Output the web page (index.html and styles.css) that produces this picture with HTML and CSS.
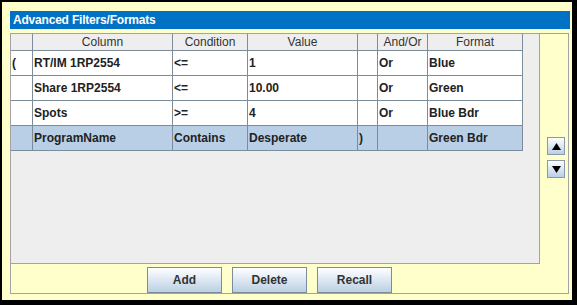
FILE: index.html
```html
<!DOCTYPE html>
<html>
<head>
<meta charset="utf-8">
<link rel="stylesheet" href="styles.css">
</head>
<body>
<div class="frame">
  <div class="title">Advanced Filters/Formats</div>
  <div class="panel">
    <div class="scroll">
      <div class="grid">
        <div class="hc"></div><div class="hc">Column</div><div class="hc">Condition</div><div class="hc">Value</div><div class="hc"></div><div class="hc">And/Or</div><div class="hc">Format</div>
        <div class="c">(</div><div class="c">RT/IM 1RP2554</div><div class="c">&lt;=</div><div class="c">1</div><div class="c"></div><div class="c">Or</div><div class="c">Blue</div>
        <div class="c"></div><div class="c">Share 1RP2554</div><div class="c">&lt;=</div><div class="c">10.00</div><div class="c"></div><div class="c">Or</div><div class="c">Green</div>
        <div class="c"></div><div class="c">Spots</div><div class="c">&gt;=</div><div class="c">4</div><div class="c"></div><div class="c">Or</div><div class="c">Blue Bdr</div>
        <div class="c sel"></div><div class="c sel">ProgramName</div><div class="c sel">Contains</div><div class="c sel">Desperate</div><div class="c sel">)</div><div class="c sel"></div><div class="c sel">Green Bdr</div>
      </div>
    </div>
    <div class="arrows">
      <div class="abtn"><svg width="9" height="7" viewBox="0 0 9 7"><polygon points="4.5,0 9,7 0,7" fill="#000"/></svg></div>
      <div class="abtn"><svg width="9" height="7" viewBox="0 0 9 7"><polygon points="0,0 9,0 4.5,7" fill="#000"/></svg></div>
    </div>
    <div class="buttons">
      <div class="btn">Add</div>
      <div class="btn">Delete</div>
      <div class="btn">Recall</div>
    </div>
  </div>
</div>
</body>
</html>
```

FILE: styles.css
```css
html, body {
  margin: 0;
  padding: 0;
  background: #000;
  width: 577px;
  height: 305px;
  overflow: hidden;
}
.frame {
  margin: 2px 0 0 2px;
  width: 570px;
  height: 298px;
  background: #FFFFCC;
  padding: 9px 0 0 8px;
  box-sizing: border-box;
  font-family: "Liberation Sans", Arial, sans-serif;
  font-size: 12px;
}
.title {
  width: 560px;
  height: 18px;
  line-height: 18px;
  background: #0072C6;
  color: #fff;
  font-weight: bold;
  padding-left: 3px;
  letter-spacing: -0.2px;
  box-sizing: border-box;
}
.panel {
  margin-top: 4px;
  width: 559px;
  height: 261px;
  border: 1px solid #A3A3A3;
  box-sizing: border-box;
  display: grid;
  grid-template-columns: 529px 1fr;
  grid-template-rows: 230px 1fr;
}
.scroll {
  background: #EEEEEE;
  border-right: 1px solid #A3A3A3;
  border-bottom: 1px solid #A3A3A3;
  box-sizing: border-box;
}
.grid {
  display: grid;
  grid-template-columns: 22px 140px 75px 110px 20px 50px 95px;
  grid-template-rows: 17px 25px 25px 25px 25px;
}
.hc, .c {
  border-right: 1px solid #7D8C9B;
  border-bottom: 1px solid #7D8C9B;
  box-sizing: border-box;
  white-space: nowrap;
  overflow: hidden;
}
.hc {
  background: #EEEEEE;
  color: #333;
  text-align: center;
  line-height: 16px;
}
.c {
  background: #fff;
  color: #222;
  font-weight: bold;
  line-height: 24px;
  padding-left: 1px;
}
.c.sel {
  background: #B8CFE5;
}
.arrows {
  display: flex;
  flex-direction: column;
  gap: 5px;
  padding: 103px 0 0 7px;
}
.abtn {
  width: 18px;
  height: 18px;
  box-sizing: border-box;
  border: 1px solid #8A99A8;
  background: linear-gradient(#ffffff, #dde8f3 50%, #b8cfe5);
  display: flex;
  align-items: center;
  justify-content: center;
}
.buttons {
  grid-column: 1 / span 2;
  display: flex;
  gap: 10px;
  padding: 3px 0 0 136px;
}
.btn {
  width: 75px;
  height: 26px;
  box-sizing: border-box;
  border: 1px solid #7D8C9B;
  background: linear-gradient(#ffffff, #e3ecf5 40%, #bccfe3);
  color: #333;
  font-weight: bold;
  text-align: center;
  line-height: 24px;
}
```
